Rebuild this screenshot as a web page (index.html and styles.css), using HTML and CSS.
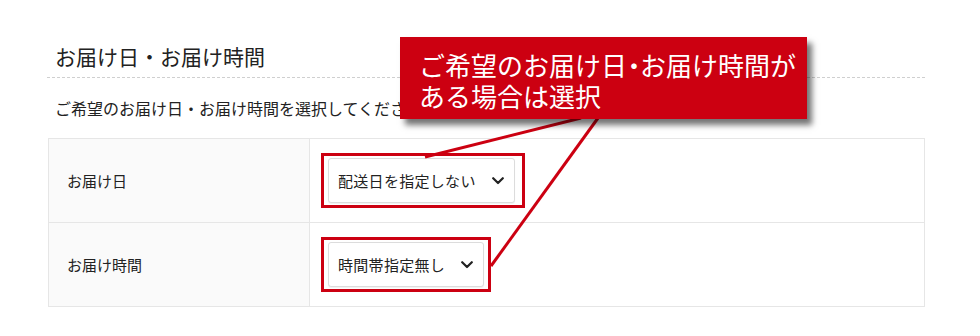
FILE: index.html
```html
<!DOCTYPE html>
<html lang="ja">
<head>
<meta charset="utf-8">
<link rel="stylesheet" href="styles.css">
</head>
<body>
<div class="page">
  <h2 class="title">お届け日・お届け時間</h2>
  <p class="lead">ご希望のお届け日・お届け時間を選択してください。</p>
  <div class="table">
    <div class="row">
      <div class="th">お届け日</div>
      <div class="td">
        <div class="hl hl--wide">
          <div class="select"><span>配送日を指定しない</span><svg class="chev" width="12" height="8" viewBox="0 0 12 8"><polyline points="1.2,1.2 6,6 10.8,1.2" fill="none" stroke="#222" stroke-width="2.2" stroke-linecap="round" stroke-linejoin="round"/></svg></div>
        </div>
      </div>
    </div>
    <div class="row">
      <div class="th">お届け時間</div>
      <div class="td">
        <div class="hl">
          <div class="select"><span>時間帯指定無し</span><svg class="chev" width="12" height="8" viewBox="0 0 12 8"><polyline points="1.2,1.2 6,6 10.8,1.2" fill="none" stroke="#222" stroke-width="2.2" stroke-linecap="round" stroke-linejoin="round"/></svg></div>
        </div>
      </div>
    </div>
  </div>
</div>
<svg class="leaders" width="980" height="336" viewBox="0 0 980 336">
  <line x1="581" y1="118" x2="425" y2="157" stroke="#cc0011" stroke-width="3"/>
  <line x1="598" y1="118" x2="491" y2="266" stroke="#cc0011" stroke-width="3"/>
</svg>
<div class="callout">ご希望のお届け日<span class="dot">・</span>お届け時間が<br>ある場合は選択</div>
</body>
</html>
```

FILE: styles.css
```css
html, body {
  margin: 0;
  padding: 0;
  background: #fff;
}
body {
  width: 980px;
  height: 336px;
  position: relative;
  overflow: hidden;
  font-family: "Noto Sans CJK JP", "Noto Sans", sans-serif;
  color: #222;
}
.page {
  padding: 42px 55px 0 47px;
}
.title {
  margin: 0;
  padding: 0 0 7px 8px;
  font-size: 21px;
  font-weight: 400;
  line-height: 28px;
  border-bottom: 1px dashed #cfcfcf;
}
.lead {
  margin: 18px 0 0 8px;
  font-size: 16px;
  line-height: 24px;
  white-space: nowrap;
}
.table {
  margin: 18px 0 0 1px;
  border: 1px solid #e6e6e6;
  width: 875px;
}
.row {
  display: flex;
  height: 83px;
}
.row + .row {
  border-top: 1px solid #e6e6e6;
}
.th {
  width: 242px;
  flex: none;
  background: #fafafa;
  border-right: 1px solid #e6e6e6;
  display: flex;
  align-items: center;
  padding-left: 18px;
  font-size: 15px;
}
.td {
  flex: 1;
  display: flex;
  align-items: center;
  padding-left: 11px;
}
.hl {
  border: 3px solid #cc0011;
  padding: 2px 4px;
}
.hl--wide {
  padding-right: 7px;
}
.select {
  height: 43px;
  border: 1px solid #dcdcdc;
  border-radius: 3px;
  background: #fff;
  box-shadow: 0 1px 1px rgba(0,0,0,0.06);
  display: flex;
  align-items: center;
  padding: 0 10px 0 9px;
  font-size: 15px;
  letter-spacing: 0.3px;
}
.chev {
  margin-left: 16px;
  display: block;
}
.leaders {
  position: absolute;
  left: 0;
  top: 0;
}
.callout {
  position: absolute;
  left: 400px;
  top: 37px;
  width: 407px;
  height: 82px;
  box-sizing: border-box;
  padding: 12px 0 0 19px;
  background: #cc0011;
  color: #fff;
  font-size: 26px;
  line-height: 31px;
  white-space: nowrap;
  box-shadow: 5px 6px 6px rgba(0,0,0,0.55);
}
.dot {
  display: inline-block;
  width: 13px;
  text-align: center;
  text-indent: -6px;
}
```
